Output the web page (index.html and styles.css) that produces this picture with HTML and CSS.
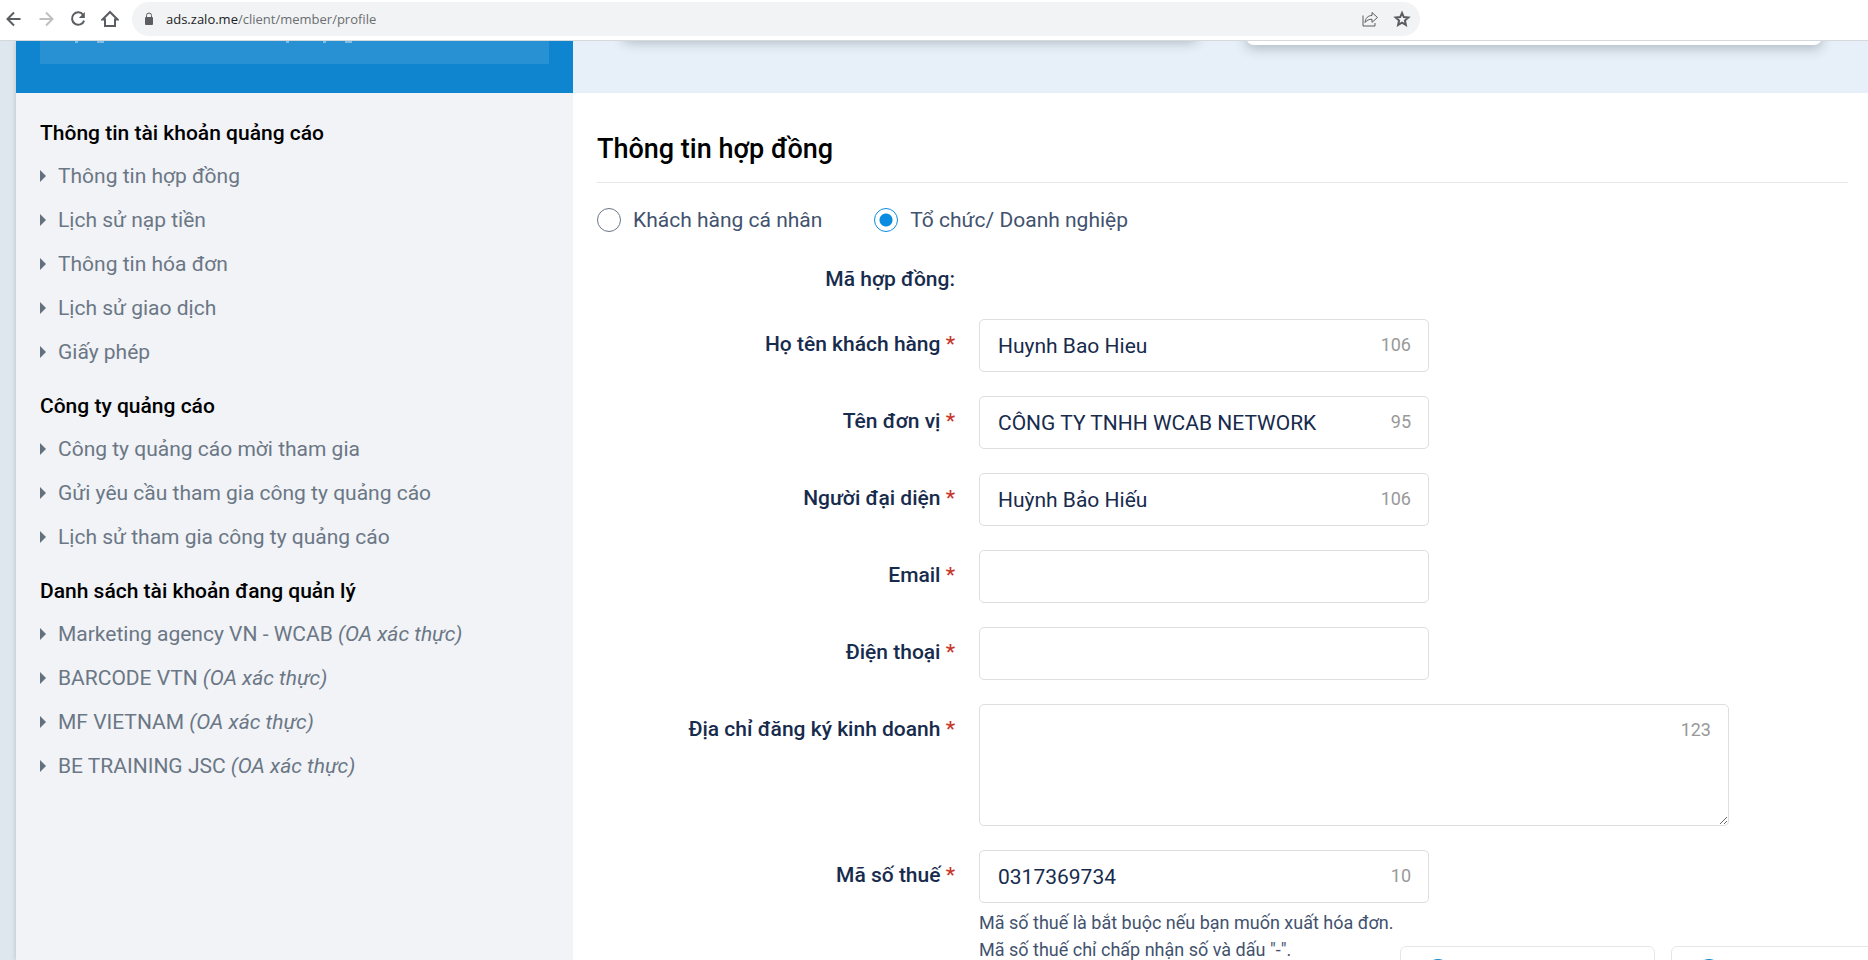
FILE: index.html
```html
<!DOCTYPE html>
<html lang="vi">
<head>
<meta charset="utf-8">
<title>Thông tin hợp đồng</title>
<link rel="stylesheet" href="styles.css">
</head>
<body>
<header class="toolbar">
  <nav class="toolbar-nav">
    <button class="icon-btn" type="button" aria-label="Back"><svg viewBox="0 0 18 18"><path d="M15.500 9H3M9 2.500 2.500 9 9 15.500"/></svg></button>
    <button class="icon-btn icon-btn-off" type="button" aria-label="Forward"><svg viewBox="0 0 18 18"><path d="M2.500 9H15M9 2.500 15.500 9 9 15.500"/></svg></button>
    <button class="icon-btn" type="button" aria-label="Reload"><svg viewBox="0 0 18 18"><path d="M14.200 4.800A6.200 6.200 0 1 0 15.100 10.600"/><path d="M15.800 2v6H9.800z" class="fill"/></svg></button>
    <button class="icon-btn" type="button" aria-label="Home"><svg viewBox="0 0 18 18"><path d="M1.500 9.500 9 2l7.500 7.500H14v6.500H4V9.500z"/></svg></button>
  </nav>
  <div class="omnibox">
    <svg class="lock" viewBox="0 0 10 14"><path d="M2.500 6V3.500a2.500 2.500 0 0 1 5 0V6" class="lock-arc"/><rect x="1" y="5" width="8" height="8" rx="1"/></svg>
    <p class="url"><span class="url-host">ads.zalo.me</span>/client/member/profile</p>
    <button class="icon-btn" type="button" aria-label="Share"><svg class="thin" viewBox="0 0 18 18"><path d="M2 5.500V16h12v-3M11 2.500V5.500C7 5.500 4.500 8 4 12.500c2-2.500 4-3.200 7-3.200v3L16.500 7.500z"/></svg></button>
    <button class="icon-btn" type="button" aria-label="Bookmark"><svg class="star" viewBox="0 0 18 18"><path d="M9 3l1.800 4.100 4.500.4-3.400 3 1 4.400L9 12.600 5.100 14.900l1-4.400-3.400-3 4.500-.4z"/></svg></button>
  </div>
</header>
<div class="page">
  <aside class="sidebar">
    <div class="account"><div class="account-box"><svg class="account-line" viewBox="0 0 320 2"><path d="M11 1h3M33 1h7M222 1h3M259 1h3M281 1h7"/></svg></div></div>
    <nav class="menu">
      <h2>Thông tin tài khoản quảng cáo</h2>
      <ul>
        <li><a href="#">Thông tin hợp đồng</a></li>
        <li><a href="#">Lịch sử nạp tiền</a></li>
        <li><a href="#">Thông tin hóa đơn</a></li>
        <li><a href="#">Lịch sử giao dịch</a></li>
        <li><a href="#">Giấy phép</a></li>
      </ul>
      <h2>Công ty quảng cáo</h2>
      <ul>
        <li><a href="#">Công ty quảng cáo mời tham gia</a></li>
        <li><a href="#">Gửi yêu cầu tham gia công ty quảng cáo</a></li>
        <li><a href="#">Lịch sử tham gia công ty quảng cáo</a></li>
      </ul>
      <h2>Danh sách tài khoản đang quản lý</h2>
      <ul>
        <li><a href="#">Marketing agency VN - WCAB <em>(OA xác thực)</em></a></li>
        <li><a href="#">BARCODE VTN <em>(OA xác thực)</em></a></li>
        <li><a href="#">MF VIETNAM <em>(OA xác thực)</em></a></li>
        <li><a href="#">BE TRAINING JSC <em>(OA xác thực)</em></a></li>
      </ul>
    </nav>
  </aside>
  <main class="main">
    <div class="hero"><div class="card card-short"></div><div class="card"></div></div>
    <form class="contract">
      <h1>Thông tin hợp đồng</h1>
      <div class="kinds">
        <label class="kind"><input type="radio" name="kind">Khách hàng cá nhân</label>
        <label class="kind"><input type="radio" name="kind" checked>Tổ chức/ Doanh nghiệp</label>
      </div>
      <div class="rows">
        <div class="row row-plain"><span class="label">Mã hợp đồng:</span></div>
        <div class="row"><label class="label" for="customer">Họ tên khách hàng <b>*</b></label>
          <div class="field"><input id="customer" type="text" value="Huynh Bao Hieu"><span class="count">106</span></div></div>
        <div class="row"><label class="label" for="unit">Tên đơn vị <b>*</b></label>
          <div class="field"><input id="unit" type="text" value="CÔNG TY TNHH WCAB NETWORK"><span class="count">95</span></div></div>
        <div class="row"><label class="label" for="agent">Người đại diện <b>*</b></label>
          <div class="field"><input id="agent" type="text" value="Huỳnh Bảo Hiếu"><span class="count">106</span></div></div>
        <div class="row"><label class="label" for="email">Email <b>*</b></label>
          <div class="field"><input id="email" type="email"></div></div>
        <div class="row"><label class="label" for="phone">Điện thoại <b>*</b></label>
          <div class="field"><input id="phone" type="tel"></div></div>
        <div class="row"><label class="label" for="address">Địa chỉ đăng ký kinh doanh <b>*</b></label>
          <div class="field field-wide"><textarea id="address"></textarea><span class="count">123</span></div></div>
        <div class="row"><label class="label" for="tax">Mã số thuế <b>*</b></label>
          <div class="field"><input id="tax" type="text" value="0317369734"><span class="count">10</span>
            <p class="help">Mã số thuế là bắt buộc nếu bạn muốn xuất hóa đơn.<br>Mã số thuế chỉ chấp nhận số và dấu "-".</p></div></div>
      </div>
    </form>
  </main>
</div>
<div class="dock">
  <button class="dock-btn" type="button" aria-label="Chat"><span class="dock-dot"></span></button>
  <button class="dock-btn" type="button" aria-label="Help"><span class="dock-dot"></span></button>
</div>
</body>
</html>
```

FILE: styles.css
```css
* { box-sizing: border-box; }
body {
  margin: 0;
  height: 100vh;
  overflow: hidden;
  display: flex;
  flex-direction: column;
  background: #dfe7ee;
  font-family: Roboto, "Noto Sans", sans-serif;
  font-size: 21px;
  line-height: 28px;
  color: #172b4d;
}
button, input, textarea { font: inherit; color: inherit; }
h1, h2, p, ul { margin: 0; padding: 0; }

.toolbar {
  flex: none;
  display: flex;
  align-items: center;
  height: 41px;
  padding: 0 448px 2px 5px;
  background: #fff;
  border-bottom: 1px solid #d5d9dc;
}
.toolbar-nav { flex: none; display: flex; gap: 14px; width: 127px; }
.icon-btn { width: 18px; height: 18px; padding: 0; border: 0; background: none; color: #5a5d61; }
.icon-btn-off { color: #bdbfc1; }
.icon-btn svg { display: block; width: 18px; height: 18px; fill: none; stroke: currentColor; stroke-width: 2; }
.icon-btn svg.thin { stroke-width: 1; }
.icon-btn .fill { fill: currentColor; stroke: none; }
.omnibox {
  flex: 1;
  display: flex;
  align-items: center;
  gap: 14px;
  height: 34px;
  padding: 0 9px 0 12px;
  border-radius: 17px;
  background: #f1f3f4;
}
.lock { width: 10px; height: 14px; margin-right: -2px; fill: #5a5d61; }
.lock-arc { fill: none; stroke: #5a5d61; }
.url { flex: 1; font: 13px/20px "Open Sans", "Noto Sans", sans-serif; color: #6b6e72; }
.url-host { color: #202124; }

.page { flex: 1; min-height: 0; display: flex; padding-left: 16px; overflow: hidden; }
.sidebar { flex: 0 0 557px; background: #f1f3f7; box-shadow: 0 0 5px rgba(40, 70, 100, .25); }
.account { height: 52px; padding: 0 24px 29px; background: #0f85cf; }
.account-box { height: 23px; padding-left: 24px; background: #2791d3; }
.account-line { display: block; width: 320px; height: 2px; fill: none; stroke: #d3e8f6; stroke-width: 1; }
.menu { padding: 19px 24px; }
.menu h2 { font-size: 21px; line-height: 42px; font-weight: 500; color: #000; }
.menu ul { list-style: none; margin-bottom: 11px; }
.menu li { display: flex; align-items: center; height: 44px; }
.menu li::before {
  content: "";
  width: 6px;
  height: 12px;
  margin-right: 12px;
  background: #63717f;
  clip-path: polygon(0 0, 100% 50%, 0 100%);
}
.menu a { color: #6b7785; text-decoration: none; }

.main { flex: 1; min-width: 0; background: #fff; }
.hero { display: flex; gap: 48px; height: 52px; padding: 0 46px 0 49px; background: #e7f0f8; overflow: hidden; }
.card {
  flex: 1;
  height: 44px;
  margin-top: -40px;
  border-radius: 8px;
  background: #fff;
  box-shadow: 0 4px 12px rgba(60, 70, 80, .3);
}
.card-short { height: 38px; }
.contract { padding: 38px 20px 0 24px; }
.contract h1 { padding-bottom: 15px; border-bottom: 1px solid #e4e6e9; font-size: 27px; line-height: 36px; font-weight: 500; color: #000; }
.kinds { display: flex; gap: 52px; padding: 23px 0; }
.kind { display: flex; align-items: center; gap: 12px; color: #42526e; }
.kind input {
  appearance: none;
  width: 24px;
  height: 24px;
  margin: 0;
  border: 1px solid #6b7785;
  border-radius: 50%;
}
.kind input:checked { border-color: #0a8ce0; background: radial-gradient(circle, #0a8ce0 6px, transparent 7px); }
.rows { display: grid; gap: 24px; padding-top: 8px; }
.row { display: grid; grid-template-columns: 358px 1fr; gap: 24px; align-items: start; }
.label { padding-top: 11px; text-align: right; font-weight: 500; }
.row-plain .label { padding: 0 0 2px; }
.label b { font-weight: 500; color: #c9372c; }
.field { position: relative; max-width: 450px; }
.field-wide { max-width: 750px; }
.field input, .field textarea {
  display: block;
  width: 100%;
  height: 53px;
  padding: 0 18px;
  border: 1px solid #dcdfe2;
  border-radius: 5px;
  background: #fff;
  outline: 0;
}
.field textarea { height: 122px; padding: 12px 18px; }
.count { position: absolute; top: 12px; right: 18px; font-size: 18px; color: #999; }
.help { padding-top: 6px; font-size: 18px; line-height: 27px; color: #42526e; white-space: nowrap; }

.dock { position: fixed; right: -58px; bottom: -34px; display: flex; gap: 16px; }
.dock-btn { width: 255px; height: 48px; padding: 0 26px; border: 1px solid #e4e6e9; border-radius: 6px; background: #fff; text-align: left; }
.dock-dot { display: block; width: 22px; height: 22px; border-radius: 50%; background: #0f85cf; }
```
